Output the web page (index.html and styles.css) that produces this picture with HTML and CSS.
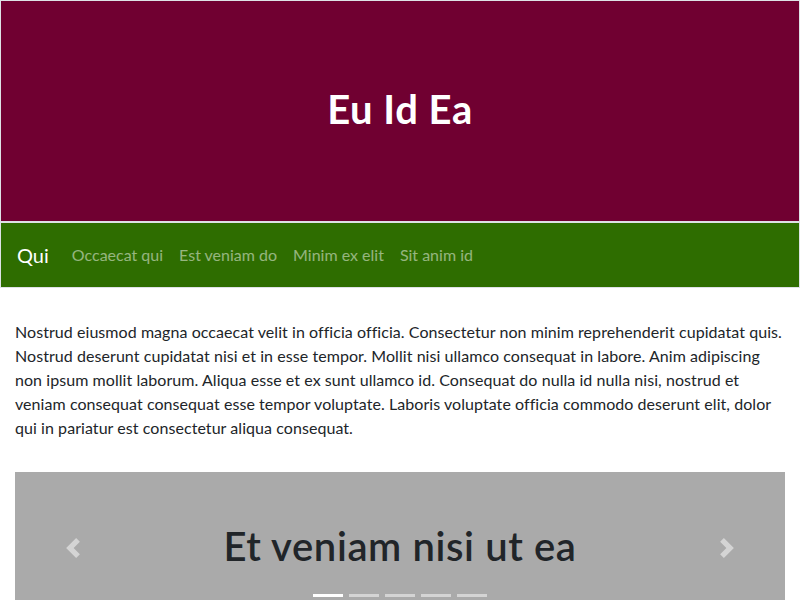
FILE: index.html
```html
<!DOCTYPE html>
<html lang="en">
<head>
<meta charset="utf-8">
<title>Eu Id Ea</title>
<link rel="stylesheet" href="styles.css">
</head>
<body>
<header class="hero">
  <h1 class="hero-title">Eu Id Ea</h1>
</header>
<nav class="navbar">
  <a class="brand" href="#">Qui</a>
  <ul class="nav">
    <li><a class="nav-link" href="#">Occaecat qui</a></li>
    <li><a class="nav-link" href="#">Est veniam do</a></li>
    <li><a class="nav-link" href="#">Minim ex elit</a></li>
    <li><a class="nav-link" href="#">Sit anim id</a></li>
  </ul>
</nav>
<main class="container">
  <p class="lead-text">Nostrud eiusmod magna occaecat velit in officia officia. Consectetur non minim reprehenderit cupidatat quis. Nostrud deserunt cupidatat nisi et in esse tempor. Mollit nisi ullamco consequat in labore. Anim adipiscing non ipsum mollit laborum. Aliqua esse et ex sunt ullamco id. Consequat do nulla id nulla nisi, nostrud et veniam consequat consequat esse tempor voluptate. Laboris voluptate officia commodo deserunt elit, dolor qui in pariatur est consectetur aliqua consequat.</p>
  <div class="carousel">
    <a class="control control-prev" href="#" aria-label="Previous">
      <svg class="control-icon" viewBox="0 0 8 8" width="20" height="20"><path d="M5.25 0l-4 4 4 4 1.5-1.5L4.25 4l2.5-2.5L5.25 0z"/></svg>
    </a>
    <h2 class="slide-title">Et veniam nisi ut ea</h2>
    <a class="control control-next" href="#" aria-label="Next">
      <svg class="control-icon" viewBox="0 0 8 8" width="20" height="20"><path d="M2.75 0l-1.5 1.5L3.75 4l-2.5 2.5L2.75 8l4-4-4-4z"/></svg>
    </a>
    <ol class="indicators">
      <li class="indicator active"></li>
      <li class="indicator"></li>
      <li class="indicator"></li>
      <li class="indicator"></li>
      <li class="indicator"></li>
    </ol>
  </div>
</main>
</body>
</html>
```
FILE: styles.css
```css
* { box-sizing: border-box; }
html, body { margin: 0; padding: 0; }
body {
  font-family: "Lato", "Open Sans", sans-serif;
  font-size: 16px;
  line-height: 1.5;
  color: #212529;
  background: #fff;
}
.hero {
  height: 222px;
  border: 1px solid #dee2e6;
  background: #700031;
  display: flex;
  align-items: center;
  justify-content: center;
  padding-bottom: 5px;
}
.hero-title {
  margin: 0;
  color: #fff;
  font-size: 40px;
  font-weight: 700;
  line-height: 1.2;
  letter-spacing: 0.5px;
}
.navbar {
  height: 66px;
  border: 1px solid #dee2e6;
  background: #2e6d00;
  display: flex;
  align-items: center;
  padding: 0 16px;
}
.brand {
  color: #fff;
  text-decoration: none;
  font-size: 20px;
  margin-right: 15px;
  line-height: 1.5;
}
.nav {
  list-style: none;
  margin: 0;
  padding: 0;
  display: flex;
}
.nav-link {
  display: block;
  padding: 8px;
  color: rgba(255,255,255,.5);
  text-decoration: none;
}
.container {
  padding: 32px 15px 0;
}
.lead-text {
  margin: 0 0 32px;
  letter-spacing: 0.06px;
}
.carousel {
  position: relative;
  height: 151px;
  background: #aaa;
  display: flex;
  align-items: center;
  justify-content: center;
}
.slide-title {
  margin: 0;
  padding-bottom: 4px;
  font-size: 40px;
  font-weight: 600;
  line-height: 1.2;
  letter-spacing: 0.6px;
}
.control {
  position: absolute;
  top: 0;
  bottom: 0;
  width: 15%;
  display: flex;
  align-items: center;
  justify-content: center;
  opacity: .5;
}
.control-prev { left: 0; }
.control-next { right: 0; }
.control-icon { fill: #fff; display: block; }
.indicators {
  position: absolute;
  left: 0;
  right: 0;
  bottom: 0;
  margin: 0 0 16px;
  padding: 0;
  list-style: none;
  display: flex;
  justify-content: center;
}
.indicator {
  width: 30px;
  height: 23px;
  margin: 0 3px;
  border-top: 10px solid transparent;
  border-bottom: 10px solid transparent;
  background: #fff;
  background-clip: padding-box;
  opacity: .5;
}
.indicator.active { opacity: 1; }
```
